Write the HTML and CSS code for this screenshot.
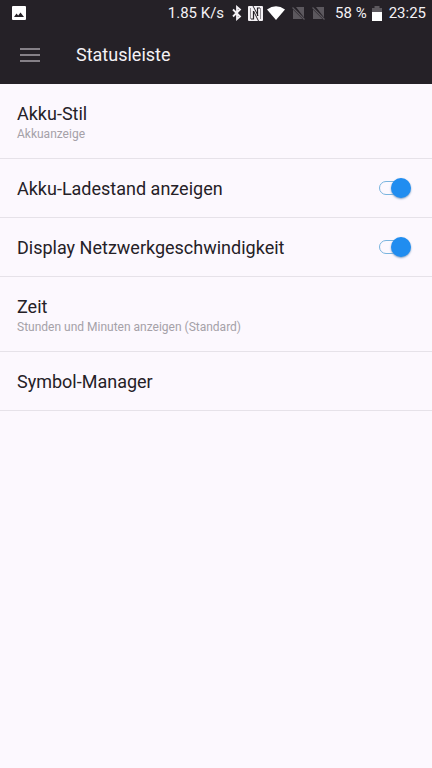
FILE: index.html
```html
<!DOCTYPE html>
<html lang="de">
<head>
<meta charset="utf-8">
<meta name="viewport" content="width=device-width, initial-scale=1">
<title>Statusleiste</title>
<link rel="stylesheet" href="styles.css">
</head>
<body>
<header class="top">
  <div class="status">
    <svg class="picture" width="14" height="14" viewBox="0 0 14 14" aria-hidden="true"><rect width="14" height="14" rx="1" fill="#fff"/><path d="M2 11l2.500-3.500 1.700 2L8.500 6.500 12 11z" fill="#252127"/></svg>
    <span class="speed">1.85 K/s</span>
    <svg class="bluetooth" width="10" height="16" viewBox="0 0 10 16" aria-hidden="true"><path d="M1 4.500l7 7L5 14V2l3 2.500-7 7" fill="none" stroke="#f4f1f5" stroke-width="1.800"/></svg>
    <svg class="nfc" width="15" height="15" viewBox="0 0 15 15" aria-hidden="true"><rect width="15" height="15" rx="1" fill="#f4f1f5"/><path d="M5.500 5v8H3M9.500 10V2H12" fill="none" stroke="#252127" stroke-width="1.200"/><path d="M2.500 2v11M12.500 2v11" stroke="#8d898f"/><path d="M5 0l5 9.500M5.500 5l5 10" stroke="#252127"/></svg>
    <svg class="wifi" width="18" height="14" viewBox="0 0 18 14" aria-hidden="true"><path d="M0 3.500Q9-3 18 3.500L9 14z" fill="#fff"/></svg>
    <svg class="sim" width="13" height="14" viewBox="0 0 13 14" aria-hidden="true"><path d="M4 1h8v10.500zM1 3.500L10.500 13H1z" fill="#5c585e"/><path d="M.5 1.500l12 12" stroke="#5c585e" stroke-width="1.200"/></svg>
    <svg class="sim" width="13" height="14" viewBox="0 0 13 14" aria-hidden="true"><path d="M4 1h8v10.500zM1 3.500L10.500 13H1z" fill="#5c585e"/><path d="M.5 1.500l12 12" stroke="#5c585e" stroke-width="1.200"/></svg>
    <span class="charge">58 %</span>
    <svg class="battery" width="10" height="15" viewBox="0 0 10 15" aria-hidden="true"><path d="M0 2h2.500V0h5v2H10v5H0z" fill="#5c585e"/><path d="M0 6h10v9H0z" fill="#fff"/></svg>
    <time class="clock">23:25</time>
  </div>
  <div class="bar">
    <button class="menu" type="button" aria-label="Menü"><svg width="20" height="14" viewBox="0 0 20 14" aria-hidden="true"><path d="M0 1h20M0 7h20M0 13h20" stroke="#858087" stroke-width="2"/></svg></button>
    <h1 class="title">Statusleiste</h1>
  </div>
</header>
<main>
  <a class="row tall" href="#akku-stil"><span class="name">Akku-Stil</span><span class="hint">Akkuanzeige</span></a>
  <label class="row toggle"><span class="name">Akku-Ladestand anzeigen</span><input class="switch" type="checkbox" role="switch" checked></label>
  <label class="row toggle"><span class="name">Display Netzwerkgeschwindigkeit</span><input class="switch" type="checkbox" role="switch" checked></label>
  <a class="row tall" href="#zeit"><span class="name">Zeit</span><span class="hint">Stunden und Minuten anzeigen (Standard)</span></a>
  <a class="row" href="#symbol-manager"><span class="name">Symbol-Manager</span></a>
</main>
</body>
</html>
```
FILE: styles.css
```css
* { box-sizing: border-box; }
body {
  margin: 0;
  background: #fcf8fe;
  color: #252127;
  font-family: Roboto, "Liberation Sans", sans-serif;
}
.top { background: #252127; color: #f4f1f5; }
.status {
  display: flex;
  align-items: center;
  height: 26px;
  padding: 0 6px 0 12px;
  font-size: 15px;
  line-height: 26px;
  white-space: nowrap;
}
.status svg { flex: none; }
.speed { margin-left: auto; }
.bluetooth { margin-left: 8px; }
.nfc { margin-left: 6px; }
.wifi { margin-left: 4px; }
.sim { margin-left: 7px; }
.charge { margin-left: 10px; }
.battery { margin-left: 5px; }
.clock { margin-left: 7px; }
.bar {
  display: flex;
  align-items: center;
  height: 58px;
  padding: 0 16px;
}
.menu {
  display: flex;
  padding: 4px;
  border: 0;
  background: none;
}
.title {
  margin: 0 0 0 32px;
  font-size: 18px;
  font-weight: 400;
  line-height: 24px;
}
.row {
  display: flex;
  flex-direction: column;
  justify-content: center;
  min-height: 59px;
  padding: 2px 17px 0;
  border-bottom: 1px solid #e6e2e9;
  color: inherit;
  text-decoration: none;
}
.tall { min-height: 75px; }
.toggle {
  flex-direction: row;
  align-items: center;
  justify-content: space-between;
}
.name { font-size: 18px; line-height: 24px; }
.hint { font-size: 12px; line-height: 16px; color: #a5a1a8; }
.switch {
  appearance: none;
  position: relative;
  flex: none;
  width: 36px;
  height: 24px;
  margin: 0;
}
.switch::before {
  content: "";
  position: absolute;
  inset: 4px 8px 6px 0;
  border: 1px solid #79b4df;
  border-radius: 7px;
}
.switch::after {
  content: "";
  position: absolute;
  top: 1px;
  left: 1px;
  width: 20px;
  height: 20px;
  border-radius: 50%;
  background: #b9b5bc;
  box-shadow: 0 1px 2px #7c9fc4;
}
.switch:checked::after { left: 12px; background: #208df0; }
```
